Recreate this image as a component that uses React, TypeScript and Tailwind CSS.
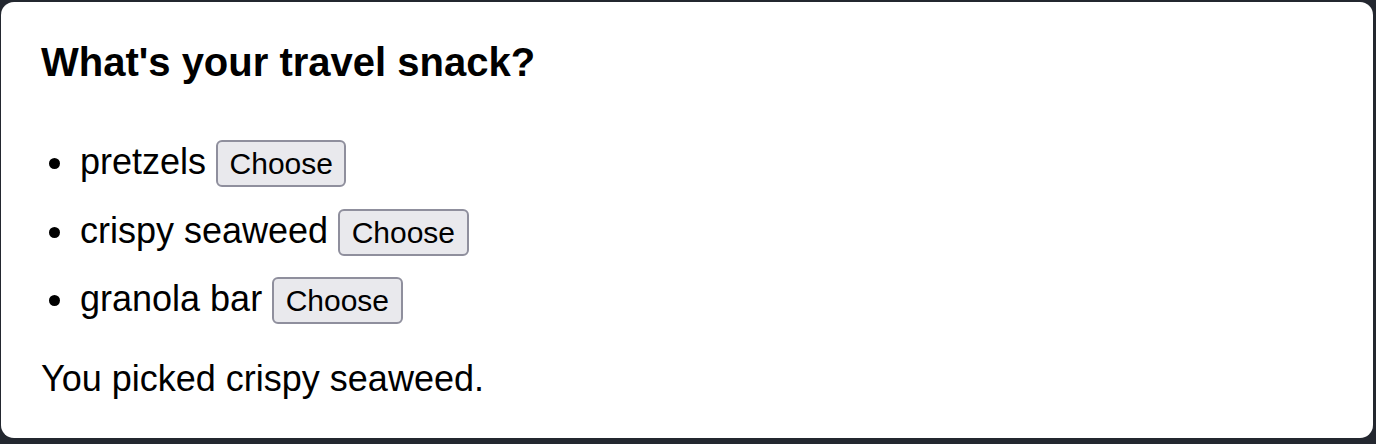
import { useState } from "react";

const snacks = ["pretzels", "crispy seaweed", "granola bar"];

function SnackRow({ name, onChoose }: { name: string; onChoose: () => void }) {
  return (
    <li className="flex items-baseline h-[47px]">
      <span className="self-center ml-[8px] mr-[20px] w-[11px] h-[11px] rounded-full bg-black"></span>
      <span className="leading-none">{name}</span>
      <button
        onClick={onChoose}
        className="ml-[10px] h-[47px] px-[11.5px] border-2 border-[#8f8f9d] bg-[#e9e9ed] rounded-[6px] text-[30px] leading-[43px] text-black"
      >
        Choose
      </button>
    </li>
  );
}

export default function App() {
  const [picked, setPicked] = useState("crispy seaweed");
  return (
    <div className="w-[1376px] h-[444px] bg-[#23272f] pt-[2px] pl-[1px] pr-[3px] pb-[6px] font-['Liberation_Sans',Arial,sans-serif] text-black">
      <div className="h-[436px] bg-white rounded-[13px] pt-[36px] pl-[40px]">
        <h2 className="text-[40px] leading-[48px] font-bold">What's your travel snack?</h2>
        <ul className="mt-[54px] flex flex-col gap-[21.5px] text-[36px]">
          {snacks.map((s) => (
            <SnackRow key={s} name={s} onChoose={() => setPicked(s)} />
          ))}
        </ul>
        <p className="mt-[37px] text-[36px] leading-none">You picked {picked}.</p>
      </div>
    </div>
  );
}
